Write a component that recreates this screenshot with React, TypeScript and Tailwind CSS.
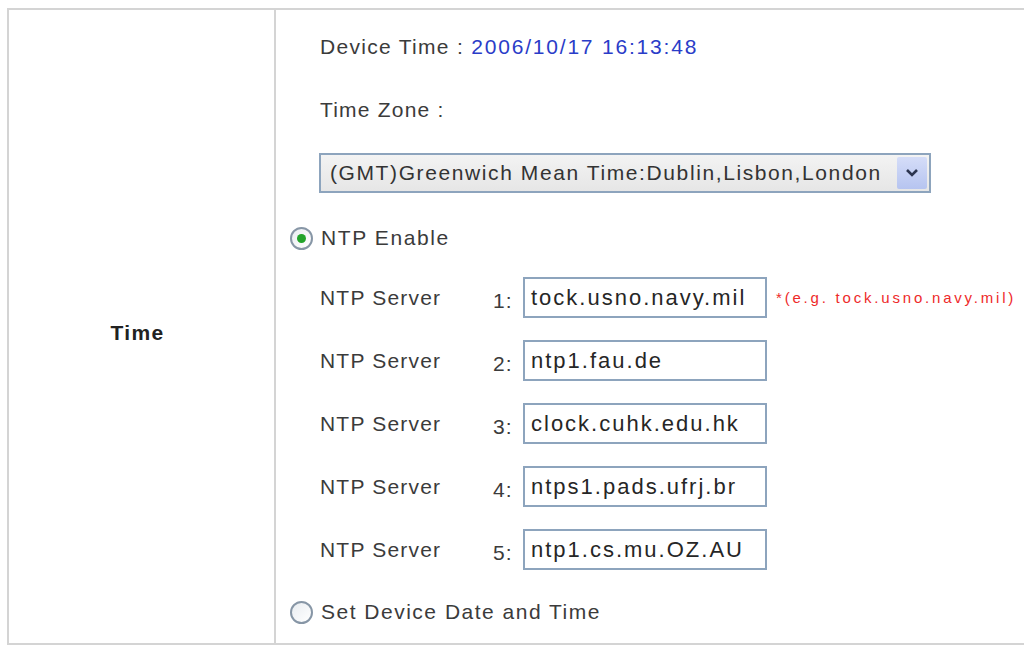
import React from "react";

const servers = [
  "tock.usno.navy.mil",
  "ntp1.fau.de",
  "clock.cuhk.edu.hk",
  "ntps1.pads.ufrj.br",
  "ntp1.cs.mu.OZ.AU",
];

const Radio = ({ checked }: { checked?: boolean }) => (
  <span className="flex items-center justify-center w-[23px] h-[23px] rounded-full border-2 border-[#8796a6] bg-gradient-to-br from-[#e9edf1] to-white shrink-0">
    {checked && <span className="w-[9px] h-[9px] rounded-full bg-[#22a32a]" />}
  </span>
);

const App = () => {
  return (
    <div className="w-[1024px] h-[646px] bg-white pt-[8px] pl-[7px] font-['Liberation_Sans',Arial,sans-serif] text-[#3b3b3b]">
      <div className="grid grid-cols-[267px_1fr] border-t-2 border-l-2 border-b-2 border-[#d4d4d4] h-[637px]">
        <div className="flex items-center justify-center border-r-2 border-[#d4d4d4] pt-[12px] pr-[8px]">
          <span className="text-[21px] font-bold tracking-[1.3px] text-[#222]">Time</span>
        </div>

        <div className="flex flex-col">
          <div className="h-[74px] flex items-center pl-[44px] text-[21px] tracking-[1.3px]">
            <span>Device Time :&nbsp;</span>
            <span className="text-[#2a3cc8] tracking-[1.8px]">2006/10/17 16:13:48</span>
          </div>

          <div className="h-[52px] flex items-center pl-[44px] text-[21px] tracking-[1.2px]">
            Time Zone :
          </div>

          <div className="h-[74px] flex items-center pl-[43px]">
            <div className="w-[612px] h-[40px] flex items-center border-2 border-[#8da4bd] bg-gradient-to-b from-[#f3f3f3] to-[#e6e6e6]">
              <span className="flex-1 pl-[9px] text-[21px] tracking-[1.6px] text-[#333] whitespace-nowrap">
                (GMT)Greenwich Mean Time:Dublin,Lisbon,London
              </span>
              <span className="w-[30px] h-[32px] mr-[2px] flex items-center justify-center bg-gradient-to-b from-[#d5ddf8] to-[#b6c4f0] rounded-[2px]">
                <svg width="14" height="10" viewBox="0 0 14 10">
                  <path d="M2 2 L7 7 L12 2" fill="none" stroke="#2c3550" strokeWidth="2.6" />
                </svg>
              </span>
            </div>
          </div>

          <div className="h-[56px] flex items-center gap-[8px] pl-[14px] text-[21px] tracking-[1.6px]">
            <Radio checked />
            <span>NTP Enable</span>
          </div>

          {servers.map((s, i) => (
            <div key={s} className="h-[63px] flex items-center pl-[44px] text-[21px]">
              <span className="w-[173px] tracking-[1.2px]">NTP Server</span>
              <span className="w-[30px] pt-[6px] tracking-[1px]">{i + 1}:</span>
              <div className="w-[244px] h-[41px] flex items-center border-2 border-[#8da4bd] bg-white pl-[6px] text-[22px] tracking-[2px] text-[#262626] whitespace-nowrap overflow-hidden">
                {s}
              </div>
              {i === 0 && (
                <span className="ml-[9px] text-[15px] tracking-[2.8px] text-[#ee2a2a] pt-[2px] whitespace-nowrap">
                  *(e.g. tock.usno.navy.mil)
                </span>
              )}
            </div>
          ))}

          <div className="h-[62px] flex items-center gap-[8px] pl-[14px] text-[21px] tracking-[1.5px]">
            <Radio />
            <span>Set Device Date and Time</span>
          </div>
        </div>
      </div>
    </div>
  );
};

export default App;
